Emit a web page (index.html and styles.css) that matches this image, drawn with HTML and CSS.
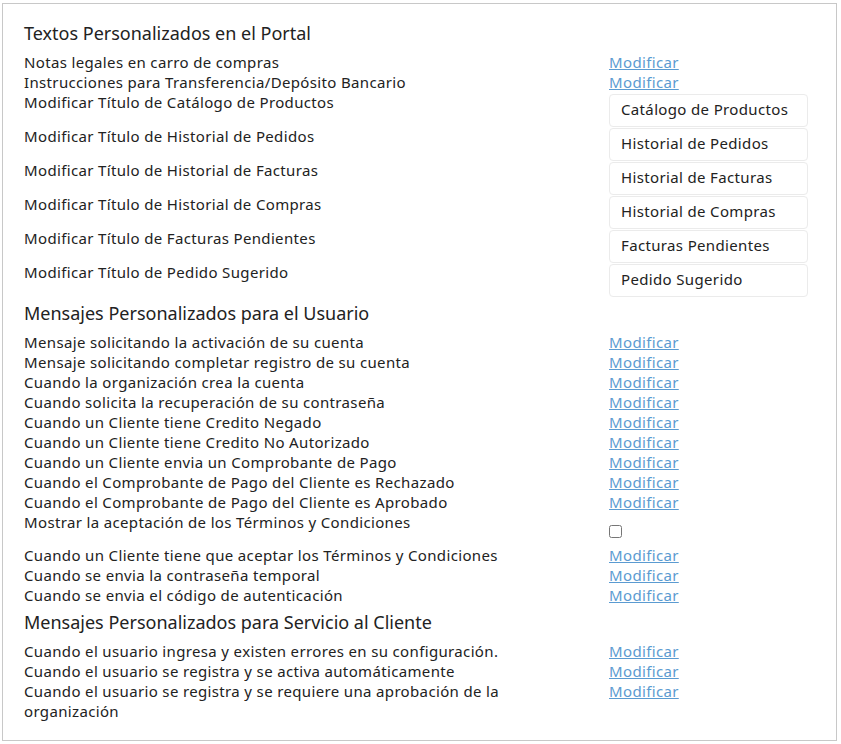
FILE: index.html
```html
<!DOCTYPE html>
<html lang="es">
<head>
<meta charset="utf-8">
<title>Textos Personalizados</title>
<link rel="stylesheet" href="styles.css">
</head>
<body>
<div class="panel">
  <h2 class="section-title first">Textos Personalizados en el Portal</h2>
  <div class="row"><span class="label">Notas legales en carro de compras</span><a class="link" href="#">Modificar</a></div>
  <div class="row"><span class="label">Instrucciones para Transferencia/Depósito Bancario</span><a class="link" href="#">Modificar</a></div>
  <div class="row input-row"><span class="label">Modificar Título de Catálogo de Productos</span><input class="field" type="text" value="Catálogo de Productos"></div>
  <div class="row input-row"><span class="label">Modificar Título de Historial de Pedidos</span><input class="field" type="text" value="Historial de Pedidos"></div>
  <div class="row input-row"><span class="label">Modificar Título de Historial de Facturas</span><input class="field" type="text" value="Historial de Facturas"></div>
  <div class="row input-row"><span class="label">Modificar Título de Historial de Compras</span><input class="field" type="text" value="Historial de Compras"></div>
  <div class="row input-row"><span class="label">Modificar Título de Facturas Pendientes</span><input class="field" type="text" value="Facturas Pendientes"></div>
  <div class="row input-row"><span class="label">Modificar Título de Pedido Sugerido</span><input class="field" type="text" value="Pedido Sugerido"></div>

  <h2 class="section-title">Mensajes Personalizados para el Usuario</h2>
  <div class="row"><span class="label">Mensaje solicitando la activación de su cuenta</span><a class="link" href="#">Modificar</a></div>
  <div class="row"><span class="label">Mensaje solicitando completar registro de su cuenta</span><a class="link" href="#">Modificar</a></div>
  <div class="row"><span class="label">Cuando la organización crea la cuenta</span><a class="link" href="#">Modificar</a></div>
  <div class="row"><span class="label">Cuando solicita la recuperación de su contraseña</span><a class="link" href="#">Modificar</a></div>
  <div class="row"><span class="label">Cuando un Cliente tiene Credito Negado</span><a class="link" href="#">Modificar</a></div>
  <div class="row"><span class="label">Cuando un Cliente tiene Credito No Autorizado</span><a class="link" href="#">Modificar</a></div>
  <div class="row"><span class="label">Cuando un Cliente envia un Comprobante de Pago</span><a class="link" href="#">Modificar</a></div>
  <div class="row"><span class="label">Cuando el Comprobante de Pago del Cliente es Rechazado</span><a class="link" href="#">Modificar</a></div>
  <div class="row"><span class="label">Cuando el Comprobante de Pago del Cliente es Aprobado</span><a class="link" href="#">Modificar</a></div>
  <div class="row check-row"><span class="label">Mostrar la aceptación de los Términos y Condiciones</span><span class="check-cell"><input class="check" type="checkbox"></span></div>
  <div class="row"><span class="label">Cuando un Cliente tiene que aceptar los Términos y Condiciones</span><a class="link" href="#">Modificar</a></div>
  <div class="row"><span class="label">Cuando se envia la contraseña temporal</span><a class="link" href="#">Modificar</a></div>
  <div class="row"><span class="label">Cuando se envia el código de autenticación</span><a class="link" href="#">Modificar</a></div>

  <h2 class="section-title">Mensajes Personalizados para Servicio al Cliente</h2>
  <div class="row"><span class="label">Cuando el usuario ingresa y existen errores en su configuración.</span><a class="link" href="#">Modificar</a></div>
  <div class="row"><span class="label">Cuando el usuario se registra y se activa automáticamente</span><a class="link" href="#">Modificar</a></div>
  <div class="row"><span class="label">Cuando el usuario se registra y se requiere una aprobación de la organización</span><a class="link" href="#">Modificar</a></div>
</div>
</body>
</html>
```
FILE: styles.css
```css
html, body {
  margin: 0;
  padding: 0;
  background: #ffffff;
}
body {
  font-family: "Noto Sans", "DejaVu Sans", sans-serif;
  font-size: 15px;
  letter-spacing: 0.35px;
  color: #222222;
}
.panel {
  margin: 3px 0 0 2px;
  width: 835px;
  height: 738px;
  box-sizing: border-box;
  border: 1px solid #c8c8c8;
  padding: 17px 20px 20px 21px;
}
.section-title {
  margin: 5px 0 7px 0;
  font-size: 18px;
  font-weight: 400;
  line-height: 24px;
  letter-spacing: 0;
  color: #222222;
}
.section-title.first {
  margin-top: 0;
}
.row {
  display: grid;
  grid-template-columns: 585px 1fr;
  line-height: 20px;
  align-items: start;
}
.label {
  padding-right: 78px;
}
.link {
  color: #5b9bd1;
  text-decoration: underline;
  justify-self: start;
}
.input-row {
  height: 34px;
}
.field {
  margin: 2px 0 0 0;
  width: 199px;
  height: 33px;
  box-sizing: border-box;
  border: 1px solid #ebebeb;
  border-radius: 4px;
  padding: 0 11px 3px 11px;
  font-family: inherit;
  font-size: 15px;
  letter-spacing: 0.35px;
  color: #222222;
  background: #fff;
  outline: none;
}
.check-row {
  height: 33px;
}
.check-cell {
  display: flex;
  padding-top: 13px;
}
.check {
  margin: 0;
  width: 13px;
  height: 13px;
}
```
